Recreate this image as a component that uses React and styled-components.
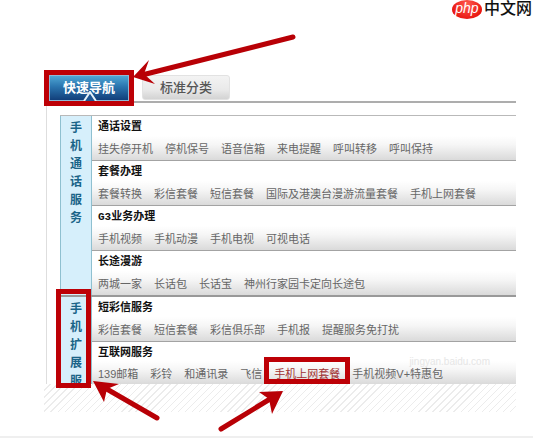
import React, { useState } from 'react';
import styled, { createGlobalStyle } from 'styled-components';

const GlobalStyle = createGlobalStyle`
    * {
        box-sizing: border-box;
    }
    body {
        margin: 0;
        background: #fff;
        font-family: "Liberation Sans", "Noto Sans CJK SC", sans-serif;
        font-size: 11px;
    }
`

const Page = styled.div`
    position: relative;
`

const Header = styled.header`
    display: flex;
    justify-content: flex-end;
    height: 20px;
`
const Logo = styled.a`
    display: flex;
    align-items: flex-start;
    gap: 2px;
    padding-right: 1px;
    color: #111;
    font-size: 16px;
    font-weight: 500;
    line-height: 18px;
    text-decoration: none;
    white-space: nowrap;
`
const PhpBadge = styled.span`
    width: 30px;
    height: 19px;
    border-radius: 50%;
    background: radial-gradient(ellipse at 50% 25%, #ff5a50, #e8150f 75%);
    color: #fff;
    font: italic 14px/16px "Liberation Sans", sans-serif;
    text-align: center;
`

const Main = styled.main`
    margin: 55px 17px 0 46px;
`
const TabBar = styled.nav`
    display: flex;
    gap: 13px;
    height: 28px;
    padding-left: 3px;
    border-bottom: 2px solid #adadad;
`
const Tab = styled.button`
    position: relative;
    width: ${props => props.$active ? '80px' : '88px'};
    height: ${props => props.$active ? '26px' : '25px'};
    padding: 0;
    border: 1px solid ${props => props.$active ? '#8fb9d6' : '#e2e2e2'};
    border-radius: ${props => props.$active ? '0' : '3px'};
    background: ${props => props.$active
        ? 'linear-gradient(#4fa6d4, #2a74ae 45%, #123f7a)'
        : 'linear-gradient(#f3f3f3, #e9e9e9 60%, #d3d3d3)'};
    color: ${props => props.$active ? '#fff' : '#555'};
    font-family: inherit;
    font-size: 13px;
    font-weight: ${props => props.$active ? 'bold' : '500'};
    line-height: 24px;
    cursor: pointer;
`
const Caret = styled.svg`
    position: absolute;
    left: 33px;
    bottom: -1px;
    width: 14px;
    height: 10px;
`

const Panel = styled.div`
    border-left: 1px solid #dedede;
    padding: 12px 0 0 13px;
`
const Group = styled.section`
    position: relative;
    display: flex;
    border-top: ${props => props.$first ? '1px solid #b9b9b9' : '2px solid #999'};
`
const Side = styled.h2`
    contain: size;
    overflow: hidden;
    flex: none;
    width: 32px;
    margin: 0;
    padding: 3px 9px 0;
    border: solid #8fc0d0;
    border-width: 0 1px;
    background: #d6effb;
    color: #1a6488;
    font-size: 12px;
    line-height: 18px;
    text-align: center;
    word-break: break-all;
`
const Rows = styled.div`
    flex: 1;
    min-width: 0;
`
const Row = styled.div`
    padding-left: 6px;
    background: linear-gradient(#fff 45%, #f6f6f6 65%, #dadada);
    border-bottom: 1px solid #a3a3a3;
    &:last-child {
        border-bottom: none;
    }
`
const Title = styled.h3`
    margin: 0;
    color: #111;
    font-family: "Liberation Mono", "Noto Sans CJK SC", monospace;
    font-size: 11px;
    line-height: 22px;
`
const Links = styled.div`
    display: flex;
    gap: 12px;
    line-height: ${props => props.$short ? '20px' : '22px'};
    white-space: nowrap;
`
const Item = styled.a`
    position: relative;
    color: ${props => props.$marked ? '#a03030' : '#666'};
    text-decoration: none;
`

// red frame laid over the element it belongs to
const Mark = styled.span`
    position: absolute;
    inset: ${props => props.$inset};
    width: ${props => props.$width || 'auto'};
    border: 5px solid #bd0006;
    pointer-events: none;
`
const Arrows = styled.svg`
    position: absolute;
    top: 0;
    left: 0;
    width: 300px;
    height: 436px;
    pointer-events: none;
`
const Watermark = styled.span`
    position: absolute;
    right: 26px;
    bottom: 17px;
    color: #e6e6e6;
    font-size: 10px;
    line-height: 10px;
`
const Hatch = styled.div`
    height: 28px;
    margin: 0 17px 24px 44px;
    background: repeating-linear-gradient(135deg, #fff 0 4px, #ececec 4px 5px);
`
const Footer = styled.footer`
    height: 2px;
    background: #efefef;
`

const tabs = ['快速导航', '标准分类']

const groups = [
    {
        name: '手机通话服务',
        rows: [
            { title: '通话设置', items: ['挂失停开机', '停机保号', '语音信箱', '来电提醒', '呼叫转移', '呼叫保持'] },
            { title: '套餐办理', items: ['套餐转换', '彩信套餐', '短信套餐', '国际及港澳台漫游流量套餐', '手机上网套餐'] },
            { title: 'G3业务办理', items: ['手机视频', '手机动漫', '手机电视', '可视电话'] },
            { title: '长途漫游', items: ['两城一家', '长话包', '长话宝', '神州行家园卡定向长途包'] },
        ],
    },
    {
        name: '手机扩展服',
        marked: true,
        rows: [
            { title: '短彩信服务', items: ['彩信套餐', '短信套餐', '彩信俱乐部', '手机报', '提醒服务免打扰'] },
            { title: '互联网服务', short: true, items: ['139邮箱', '彩铃', '和通讯录', '飞信', '手机上网套餐', '手机视频V+特惠包'] },
        ],
    },
]

function ServiceGroup({ group, first }) {
    return (
        <Group $first={first}>
            <Side>{group.name}</Side>
            <Rows>
                {group.rows.map(row => (
                    <Row key={row.title}>
                        <Title>{row.title}</Title>
                        <Links $short={row.short}>
                            {row.items.map(item => {
                                const marked = group.marked && item === '手机上网套餐'
                                return (
                                    <Item key={item} href="#" $marked={marked}>
                                        {item}
                                        {marked && <Mark $inset="-7px -10px 0 -10px"/>}
                                    </Item>
                                )
                            })}
                        </Links>
                    </Row>
                ))}
            </Rows>
            {group.marked && <Mark $inset="-8px auto -4px -4px" $width="35px"/>}
            {group.marked && <Watermark>jingyan.baidu.com</Watermark>}
        </Group>
    )
}

export default function App() {
    const [active, setActive] = useState(0)

    return (
        <Page>
            <GlobalStyle/>
            <Header>
                <Logo href="#">
                    <PhpBadge>php</PhpBadge>
                    中文网
                </Logo>
            </Header>
            <Main>
                <TabBar>
                    {tabs.map((tab, i) => (
                        <Tab key={tab} $active={i === active} onClick={() => setActive(i)}>
                            {tab}
                            {i === active && (
                                <Caret viewBox="0 0 14 10">
                                    <path d="M1 10L7 1L13 10" fill="#1d5592" stroke="#e6f1f8" strokeWidth="2"/>
                                </Caret>
                            )}
                            {i === active && <Mark $inset="-6px"/>}
                        </Tab>
                    ))}
                </TabBar>
                <Panel>
                    {groups.map((group, i) => (
                        <ServiceGroup key={group.name} group={group} first={i === 0}/>
                    ))}
                </Panel>
            </Main>
            <Hatch/>
            <Footer/>
            <Arrows viewBox="0 0 300 436" fill="#b80006" stroke="#b80006">
                <g strokeWidth="5" strokeLinecap="round">
                    <path d="M293 37L142 75"/>
                    <path d="M157 418L105 388"/>
                    <path d="M221 429L270 399"/>
                </g>
                <g stroke="none">
                    <path d="M133 77L149 60L144 74L155 84Z"/>
                    <path d="M93 381L119 384L107 389L104 402Z"/>
                    <path d="M283 391L259 392L269 399L272 414Z"/>
                </g>
            </Arrows>
        </Page>
    )
}
